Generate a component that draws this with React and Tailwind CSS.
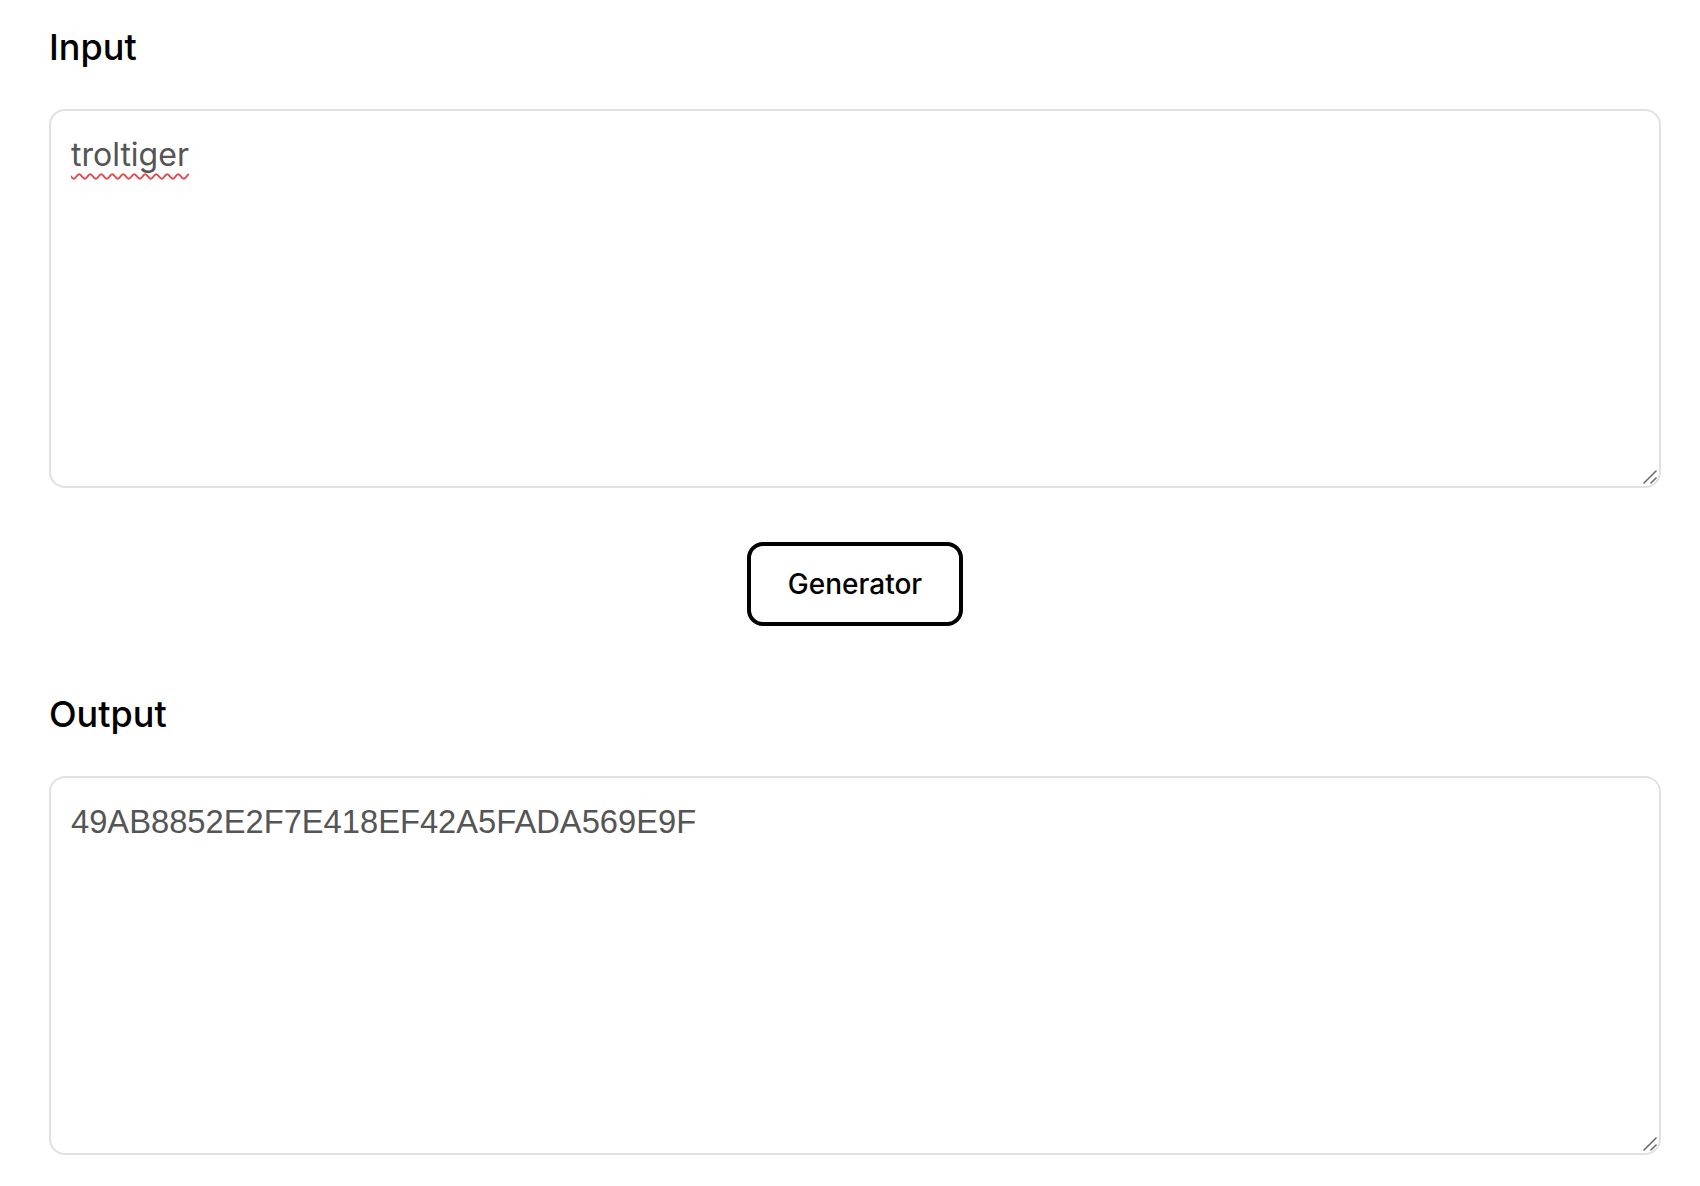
import { useState } from 'react';

function Label({ children }) {
  return (
    <div className="text-[36px] leading-[54px] font-medium text-black font-['Inter',sans-serif]">
      {children}
    </div>
  );
}

// textarea with a drawn resize grip in the corner
function TextBox({ value, onChange, className }) {
  return (
    <div className="relative mt-[35px]">
      <textarea
        value={value}
        onChange={onChange}
        spellCheck={false}
        className={`block h-[379px] w-full resize-none rounded-[16px] border-2 border-[#e1e1e1] bg-white px-[20px] pt-[24px] pb-4 leading-[40px] text-[#555] outline-none ${className}`}
      />
      <svg
        className="pointer-events-none absolute right-[3px] bottom-[3px] h-[16px] w-[16px]"
        viewBox="0 0 16 16"
        fill="none"
        stroke="#6b6b6b"
        strokeWidth="1.6"
        strokeLinecap="round"
      >
        <path d="M2 14L14 2" />
        <path d="M9 14L14 9" />
      </svg>
    </div>
  );
}

export default function App() {
  const [input, setInput] = useState('troltiger');
  const [output] = useState('49AB8852E2F7E418EF42A5FADA569E9F');

  return (
    <div className="min-h-screen bg-white pl-[49px] pr-[39px] pt-[20px]">
      <Label>Input</Label>
      <TextBox
        value={input}
        onChange={(e) => setInput(e.target.value)}
        className="text-[32px] font-['Inter',sans-serif] underline decoration-wavy decoration-[#e5484d] decoration-[1.5px] underline-offset-[7px] [text-decoration-skip-ink:none]"
      />

      <div className="mt-[54px] flex justify-center">
        <button className="h-[84px] w-[216px] rounded-[16px] border-4 border-black bg-white text-[28px] font-medium text-black font-['Inter',sans-serif]">
          Generator
        </button>
      </div>

      <div className="mt-[61px]">
        <Label>Output</Label>
      </div>
      <TextBox
        value={output}
        onChange={() => {}}
        className="text-[32.7px] font-['Liberation_Sans',Arial,sans-serif]"
      />
    </div>
  );
}
